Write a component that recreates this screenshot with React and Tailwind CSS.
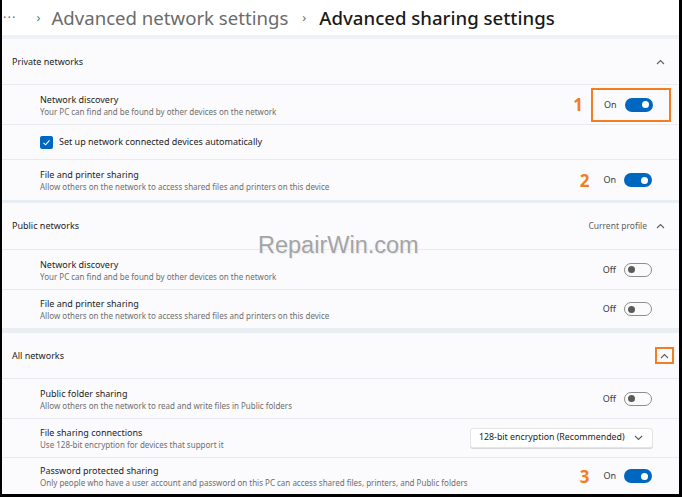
import React from "react";

const Toggle = ({ on }) =>
    on ? (
        <span className="relative inline-block w-[28px] h-[14px] rounded-full bg-[#0067c0]">
            <span className="absolute right-[4px] top-[3.5px] w-[7px] h-[7px] rounded-full bg-white" />
        </span>
    ) : (
        <span className="relative inline-block w-[28px] h-[14px] rounded-full border border-[#8d8d8d] bg-[#fbfbfb]">
            <span className="absolute left-[3px] top-[2.5px] w-[7px] h-[7px] rounded-full bg-[#5b5b5b]" />
        </span>
    );

const Chevron = ({ down }) => (
    <svg width="9" height="6" viewBox="0 0 9 6" className={down ? "rotate-180" : ""}>
        <path d="M1 5 L4.5 1.5 L8 5" fill="none" stroke="#5f5f5f" strokeWidth="1.1" />
    </svg>
);

const Row = ({ title, sub, h, children }) => (
    <div className={`flex items-center justify-between pl-[38px] pr-[27px] border-t border-[#e8eaee] ${h}`}>
        <div className="flex flex-col">
            <span className="text-[9px] leading-[13px] text-[#1c1c1c]">{title}</span>
            <span className="text-[8px] leading-[11px] text-[#6e6e6e]">{sub}</span>
        </div>
        {children}
    </div>
);

const Switch = ({ on, mark }) => (
    <div className="flex items-center">
        {mark && <span className="mr-[14px] text-[17px] font-bold leading-none text-[#f47d20]">{mark}</span>}
        <span className="text-[9px] text-[#3a3a3a] mr-[8px]">{on ? "On" : "Off"}</span>
        <Toggle on={on} />
    </div>
);

const Header = ({ label, h, right }) => (
    <div className={`flex items-center justify-between pl-[10px] pr-[12px] ${h}`}>
        <span className="text-[9px] text-[#1c1c1c]">{label}</span>
        <div className="flex items-center">{right}</div>
    </div>
);

export default function App() {
    return (
        <div className="relative w-[682px] h-[497px] overflow-hidden bg-[#fbfbfd] border-l-2 border-r-[3px] border-b-[3px] border-black" style={{ fontFamily: "'Noto Sans', sans-serif" }}>
            <div className="h-[35px] bg-white flex items-center pl-[1px] text-[18.6px]">
                <span className="text-[#707070] text-[13px] tracking-[1px] mr-[20px]">···</span>
                <span className="text-[#707070] text-[13px] mr-[11px]">›</span>
                <span className="text-[#6b6b6b]">Advanced network settings</span>
                <span className="text-[#707070] text-[13px] ml-[14px] mr-[13px]">›</span>
                <span className="text-[#1a1a1a] font-medium">Advanced sharing settings</span>
            </div>
            <div className="h-[4px] bg-[#eef1f6]" />

            <Header label="Private networks" h="h-[45px]" right={<span className="mr-[2px]"><Chevron /></span>} />
            <Row title="Network discovery" sub="Your PC can find and be found by other devices on the network" h="h-[40px]">
                <div className="flex items-center">
                    <span className="mr-[8px] text-[17px] font-bold leading-none text-[#f47d20]">1</span>
                    <div className="flex items-center border-2 border-[#f47d20] w-[80px] h-[34px] pl-[11px] mr-[-19px]">
                        <span className="text-[9px] text-[#3a3a3a] mr-[8px]">On</span>
                        <Toggle on />
                    </div>
                </div>
            </Row>
            <div className="flex items-center gap-[6px] pl-[38px] h-[35px] border-t border-[#e8eaee]">
                <span className="w-[13px] h-[13px] rounded-[2px] bg-[#0067c0] flex items-center justify-center">
                    <svg width="9" height="9" viewBox="0 0 9 9">
                        <path d="M1.5 4.8 L3.6 6.8 L7.5 2.3" fill="none" stroke="white" strokeWidth="1.1" />
                    </svg>
                </span>
                <span className="text-[9px] text-[#1c1c1c]">Set up network connected devices automatically</span>
            </div>
            <Row title="File and printer sharing" sub="Allow others on the network to access shared files and printers on this device" h="h-[41px]">
                <Switch on mark="2" />
            </Row>
            <div className="h-[3px] bg-[#e9eef5]" />

            <Header label="Public networks" h="h-[46px]" right={<><span className="text-[8.5px] text-[#5f5f5f] mr-[9px]">Current profile</span><span className="mr-[2px]"><Chevron /></span></>} />
            <Row title="Network discovery" sub="Your PC can find and be found by other devices on the network" h="h-[40px]">
                <Switch on={false} />
            </Row>
            <Row title="File and printer sharing" sub="Allow others on the network to access shared files and printers on this device" h="h-[39px]">
                <Switch on={false} />
            </Row>
            <div className="h-[5px] bg-[#e9eef5]" />

            <div className="flex items-center justify-between pl-[10px] pr-[5px] h-[45px]">
                <span className="text-[9px] text-[#1c1c1c]">All networks</span>
                <span className="w-[19px] h-[17px] border-2 border-[#f47d20] flex items-center justify-center">
                    <Chevron />
                </span>
            </div>
            <Row title="Public folder sharing" sub="Allow others on the network to read and write files in Public folders" h="h-[40px]">
                <Switch on={false} />
            </Row>
            <Row title="File sharing connections" sub="Use 128-bit encryption for devices that support it" h="h-[39px]">
                <div className="flex items-center justify-between w-[183px] h-[20px] bg-white border border-[#e4e4e4] rounded-[3px] pl-[8px] pr-[9px] shadow-[0_1px_0_#d8d8d8] mr-[-1px]">
                    <span className="text-[8.8px] whitespace-nowrap text-[#1c1c1c]">128-bit encryption (Recommended)</span>
                    <Chevron down />
                </div>
            </Row>
            <Row title="Password protected sharing" sub="Only people who have a user account and password on this PC can access shared files, printers, and Public folders" h="h-[37px]">
                <Switch on mark="3" />
            </Row>

            <div className="absolute left-[256px] top-[234px] text-[23.5px] text-[#a4a4a4] leading-none [text-shadow:0_0_1px_#fff,1px_1px_0_#e8e8e8]" style={{ fontFamily: "'Liberation Sans', Arial, sans-serif" }}>
                RepairWin.com
            </div>
        </div>
    );
}
